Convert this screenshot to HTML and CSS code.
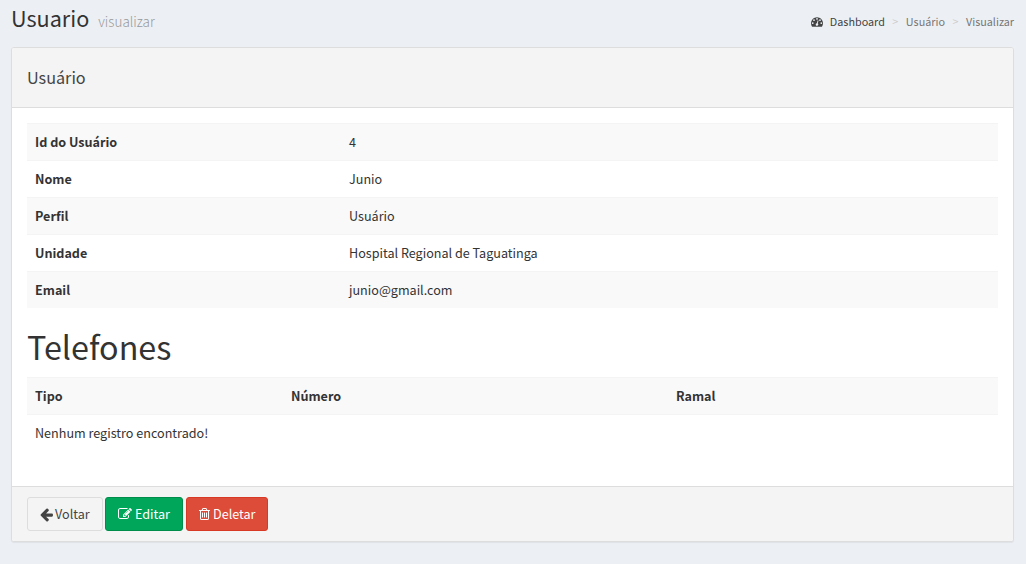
FILE: index.html
```html
<!DOCTYPE html>
<html lang="pt-BR">
<head>
<meta charset="utf-8">
<title>Usuario - visualizar</title>
<link rel="stylesheet" href="styles.css">
</head>
<body>
<header class="page-header">
  <h1 class="page-title"><span class="title-text">Usuario</span><small class="subtitle">visualizar</small></h1>
  <nav class="breadcrumb">
    <svg class="icon-dashboard" viewBox="0 128 1792 1536"><path d="M384 1152q0-53-37.5-90.5t-90.5-37.5-90.5 37.5-37.5 90.5 37.5 90.5 90.5 37.5 90.5-37.5 37.5-90.5zm192-448q0-53-37.5-90.5t-90.5-37.5-90.5 37.5-37.5 90.5 37.5 90.5 90.5 37.5 90.5-37.5 37.5-90.5zm428 481l101-382q6-26-7.5-48.5t-38.5-29.5-48 6.5-30 39.5l-101 382q-60 5-107 43.5t-63 98.5q-20 77 20 146t117 89 146-20 89-117q16-60-6-117t-72-91zm660-33q0-53-37.5-90.5t-90.5-37.5-90.5 37.5-37.5 90.5 37.5 90.5 90.5 37.5 90.5-37.5 37.5-90.5zm-640-640q0-53-37.5-90.5t-90.5-37.5-90.5 37.5-37.5 90.5 37.5 90.5 90.5 37.5 90.5-37.5 37.5-90.5zm448 192q0-53-37.5-90.5t-90.5-37.5-90.5 37.5-37.5 90.5 37.5 90.5 90.5 37.5 90.5-37.5 37.5-90.5zm320 448q0 261-141 483-19 29-54 29h-1402q-35 0-54-29-141-221-141-483 0-182 71-348t191-286 286-191 348-71 348 71 286 191 191 286 71 348z"/></svg>
    <a class="crumb crumb-home">Dashboard</a><span class="sep">&gt;</span><a class="crumb crumb-user">Usuário</a><span class="sep">&gt;</span><span class="crumb crumb-view">Visualizar</span>
  </nav>
</header>
<main class="box">
  <div class="box-header"><h3 class="box-title">Usuário</h3></div>
  <div class="box-body">
    <table class="table details">
      <tr><th>Id do Usuário</th><td>4</td></tr>
      <tr><th>Nome</th><td>Junio</td></tr>
      <tr><th>Perfil</th><td>Usuário</td></tr>
      <tr><th>Unidade</th><td>Hospital Regional de Taguatinga</td></tr>
      <tr><th>Email</th><td>junio@gmail.com</td></tr>
    </table>
    <h1 class="section-title">Telefones</h1>
    <table class="table phones">
      <tr><th class="col-type">Tipo</th><th class="col-number">Número</th><th>Ramal</th></tr>
      <tr><td colspan="3">Nenhum registro encontrado!</td></tr>
    </table>
  </div>
  <footer class="box-footer">
    <a class="btn btn-default"><svg class="icon icon-arrow" viewBox="128 0 1536 1792"><path d="M1664 896v128q0 53-32.500 90.500t-84.500 37.500h-704l293 294q38 36 38 90t-38 90l-75 76q-37 37-90 37-52 0-91-37l-651-652q-37-37-37-90 0-52 37-91l651-650q38-38 91-38 52 0 90 38l75 74q38 38 38 91t-38 91l-293 293h704q52 0 84.500 37.500t32.500 90.500z"/></svg><span>Voltar</span></a>
    <a class="btn btn-success"><svg class="icon icon-edit" viewBox="0 0 1792 1792"><path d="M888 1184l116-116-152-152-116 116v56h96v96h56zm440-720q-16-16-33 1l-350 350q-17 17-1 33t33-1l350-350q17-17 1-33zm80 594v190q0 119-84.500 203.500t-203.500 84.500h-832q-119 0-203.500-84.500t-84.500-203.500v-832q0-119 84.500-203.500t203.500-84.500h832q63 0 117 25 15 7 18 23 3 17-9 29l-49 49q-14 14-32 8-23-6-45-6h-832q-66 0-113 47t-47 113v832q0 66 47 113t113 47h832q66 0 113-47t47-113v-126q0-13 9-22l64-64q15-15 35-7t20 29zm-96-738l288 288-672 672h-288v-288zm444 132l-92 92-288-288 92-92q28-28 68-28t68 28l152 152q28 28 28 68t-28 68z"/></svg><span>Editar</span></a>
    <a class="btn btn-danger"><svg class="icon icon-trash" viewBox="192 0 1408 1792"><path d="M704 736v576q0 14-9 23t-23 9h-64q-14 0-23-9t-9-23v-576q0-14 9-23t23-9h64q14 0 23 9t9 23zm256 0v576q0 14-9 23t-23 9h-64q-14 0-23-9t-9-23v-576q0-14 9-23t23-9h64q14 0 23 9t9 23zm256 0v576q0 14-9 23t-23 9h-64q-14 0-23-9t-9-23v-576q0-14 9-23t23-9h64q14 0 23 9t9 23zm128 724v-948h-896v948q0 22 7 40.500t14.500 27 10.500 8.500h832q3 0 10.500-8.500t14.500-27 7-40.500zm-672-1076h448l-48-117q-7-9-17-11h-317q-10 2-17 11zm928 32v64q0 14-9 23t-23 9h-96v948q0 83-47 143.500t-113 60.500h-832q-66 0-113-58.500t-47-141.500v-952h-96q-14 0-23-9t-9-23v-64q0-14 9-23t23-9h309l70-167q15-37 54-63t79-26h320q40 0 79 26t54 63l70 167h309q14 0 23 9t9 23z"/></svg><span>Deletar</span></a>
  </footer>
</main>
</body>
</html>
```
FILE: styles.css
```css
* { box-sizing: border-box; }
body {
  margin: 0;
  height: 564px;
  padding: 0 12px 0 11px;
  overflow: hidden;
  background: #ecf0f5;
  color: #333;
  font: 12.6px/20px "Noto Sans CJK JP", "Noto Sans CJK SC", sans-serif;
}
h1, h3 { margin: 0; font-weight: 400; }
.page-header { display: flex; justify-content: space-between; height: 47px; }
.page-title { display: flex; align-items: baseline; font-size: 21.6px; line-height: 36px; }
.subtitle { margin-left: 9px; font-size: 13.5px; font-weight: 300; color: #999; }
.breadcrumb { display: flex; align-items: center; height: 42px; font-size: 10.8px; color: #777; }
.icon-dashboard { width: 12px; height: 11px; margin: 1px 7px 0 0; fill: #444; }
.crumb-home { color: #444; }
.sep { width: 21px; text-align: center; color: #ccc; }
.box {
  height: 495px;
  display: flex;
  flex-direction: column;
  border: 1px solid #ddd;
  border-radius: 3px;
  background: #fff;
  box-shadow: 0 1px 1px rgba(0, 0, 0, .06);
  overflow: hidden;
}
.box-header { height: 60px; padding: 0 15px; border-bottom: 1px solid #ddd; background: #f4f4f4; }
.box-title { font-size: 16.2px; line-height: 59px; color: #444; }
.box-body { flex: 1; padding: 15px; }
.table { width: 971px; border-collapse: separate; border-spacing: 0; table-layout: fixed; }
.table th, .table td { height: 37px; padding: 0 8px; border-top: 1px solid #f4f4f4; text-align: left; vertical-align: middle; }
.table th { font-weight: 700; }
.table tr:nth-child(odd) { background: #f9f9f9; }
.details th { width: 314px; }
.col-type { width: 256px; }
.col-number { width: 385px; }
.section-title { height: 69px; padding-top: 18px; font-size: 32.3px; line-height: 40px; }
.box-footer { display: flex; gap: 2px; height: 55px; padding: 10px 15px; border-top: 1px solid #ddd; background: #f4f4f4; }
.btn { display: flex; align-items: center; gap: 3px; height: 34px; padding: 0 12px; border: 1px solid; border-radius: 3px; }
.btn-default { width: 76px; gap: 2px; color: #444; background: #f4f4f4; border-color: #ddd; }
.btn-success { width: 78px; color: #fff; background: #00a65a; border-color: #008d4c; }
.btn-danger { width: 82px; margin-left: 1px; color: #fff; background: #dd4b39; border-color: #d73925; }
.icon { flex: none; width: 14px; height: 14px; fill: currentColor; }
.icon-arrow { width: 13px; height: 15px; }
.icon-trash { width: 11px; }
```
